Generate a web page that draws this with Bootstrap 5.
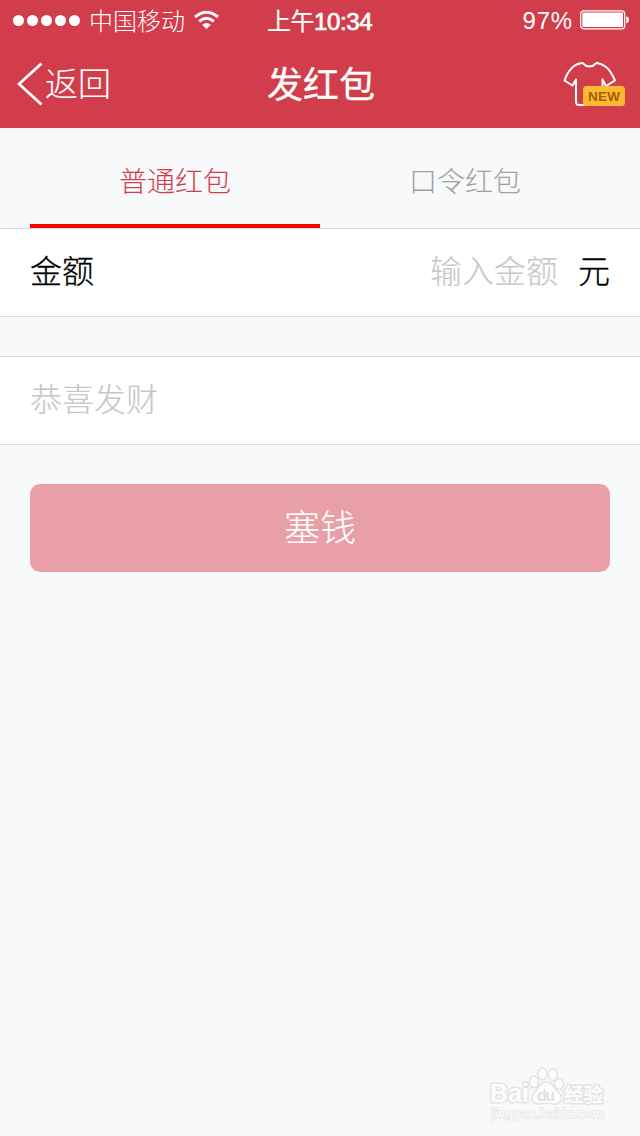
<!DOCTYPE html>
<html lang="zh-CN">
<head>
<meta charset="utf-8">
<meta name="viewport" content="width=device-width, initial-scale=1">
<title>发红包</title>
<link href="https://cdn.jsdelivr.net/npm/bootstrap@5.3.0/dist/css/bootstrap.min.css" rel="stylesheet">
<style>
  body { background: #f8f9fb; font-family: "Liberation Sans", "Noto Sans CJK SC", sans-serif; font-weight: 300; color: #000; line-height: 1; }
  .app { width: 640px; height: 1136px; }
  .top { background: #d13d4b; color: #fff; height: 128px; }
  .third { flex: 1 1 0; }
  .status { height: 40px; font-size: 24px; }
  .status .label { padding-top: 3px; }
  .carrier { margin: 0 9px; }
  .dots { gap: 3px; padding-left: 13px; }
  .dots i { width: 11px; height: 11px; border-radius: 50%; background: #fff; }
  .clock { font-weight: 400; letter-spacing: -.4px; -webkit-text-stroke: .2px; padding-right: 1px; }
  .clock b { font-weight: 400; -webkit-text-stroke: .7px; }
  .titlebar { height: 88px; padding: 0 15px 0 17px; }
  .back { font-size: 33px; gap: 2px; color: #fff; -webkit-text-stroke: .15px; }
  .back svg { margin-top: 2px; }
  .page-title { font-size: 36px; font-weight: 400; -webkit-text-stroke: .3px; padding-top: 3px; }
  .tabs { height: 100px; padding: 0 30px; font-size: 28px; }
  .tabs .nav-link { color: #a0a0a0; padding: 13px 0 0; border-radius: 0; border-bottom: 4px solid transparent; }
  .tabs .nav-link.active { color: #d13d4b; border-color: #f00; }
  .field { height: 89px; padding: 0 30px; background: #fff; border-top: 1px solid #dadcdf; border-bottom: 1px solid #dadcdf; font-size: 32px; }
  .field .form-control { font: inherit; background: transparent; color: #000; height: 60px; box-shadow: none; -webkit-text-stroke: .15px; }
  .field .form-control::placeholder { color: #c7c7cd; opacity: 1; }
  .field label, .unit { -webkit-text-stroke: .3px; padding-bottom: 1px; }
  .submit, .submit:disabled { height: 88px; border-radius: 10px; background: #e89fa5; color: #fff; font-size: 36px; font-weight: 300; opacity: 1; border: 0; padding-top: 8px; -webkit-text-stroke: .15px; }
</style>
</head>
<body>
<main class="app d-flex flex-column overflow-hidden">
  <header class="top">
    <div class="status d-flex align-items-center">
      <div class="third d-flex align-items-center">
        <span class="dots d-flex"><i></i><i></i><i></i><i></i><i></i></span>
        <span class="label carrier">中国移动</span>
        <svg width="26" height="20" viewBox="0 0 26 20" fill="none" stroke="#fff" stroke-width="3"><path d="M1 7Q12.500-2.600 24 7M5.200 11.400Q12.500 5.100 19.800 11.400"/><path d="M12.500 19l-4.400-4.300q4.400-3.200 8.800 0z" fill="#fff" stroke="none"/></svg>
      </div>
      <div class="label clock text-nowrap">上午<b>10:34</b></div>
      <div class="third d-flex align-items-center justify-content-end">
        <span style="letter-spacing:.8px;padding-top:2px">97%</span>
        <svg style="margin:0 10px 0 7px" width="50" height="20" viewBox="0 0 50 20"><rect x=".7" y=".8" width="44" height="18" rx="3" fill="none" stroke="#fff" stroke-width="1.2"/><rect x="2.400" y="2.500" width="40.600" height="14.600" rx="1" fill="#fff"/><path d="M46.300 6.200q2.700.7 2.700 3.600t-2.700 3.600z" fill="#fff"/></svg>
      </div>
    </div>
    <nav class="titlebar d-flex align-items-center">
      <div class="third">
        <a class="back d-inline-flex align-items-center text-decoration-none" href="#">
          <svg width="26" height="44" viewBox="0 0 26 44" fill="none" stroke="#fff" stroke-width="2.800"><path d="M24.500 1.500L2 22l22.500 20.500"/></svg>
          <span class="pt-1">返回</span>
        </a>
      </div>
      <h1 class="page-title m-0">发红包</h1>
      <div class="third d-flex justify-content-end">
        <svg width="64" height="46" viewBox="0 0 64 46"><path d="M21 2C24 2 22.500 5.500 28.500 5.500C34.500 5.500 33 2 36 2C43 3.500 47 7 49.500 11Q52 15 54 19.500L45 25L41.500 18.500V44H18Q15 44 15 40.500V18.500L11.500 24.500L3.500 19.500Q6 12 10.500 7.500Q14 3 21 2Z" fill="none" stroke="#fff" stroke-width="2" stroke-linejoin="round"/><rect x="22" y="25" width="42" height="20" rx="3.500" fill="#fdb934"/><text x="43" y="40" font-family="Liberation Sans, sans-serif" font-size="13.500" font-weight="700" fill="#a75d00" text-anchor="middle" textLength="32">NEW</text></svg>
      </div>
    </nav>
  </header>

  <nav class="tabs nav nav-fill flex-nowrap">
    <a class="nav-link active w-50 d-flex align-items-center justify-content-center" href="#">普通红包</a>
    <a class="nav-link w-50 d-flex align-items-center justify-content-center" href="#">口令红包</a>
  </nav>

  <form>
    <div class="field d-flex align-items-center">
      <label for="amount" class="text-nowrap">金额</label>
      <input id="amount" class="form-control border-0 p-0 text-end" placeholder="输入金额">
      <span class="unit" style="margin-left:20px">元</span>
    </div>
    <div class="field d-flex align-items-center" style="margin-top:39px">
      <input class="form-control border-0 p-0" placeholder="恭喜发财" aria-label="祝福语">
    </div>
    <div style="padding:39px 30px 0">
      <button class="submit btn w-100" type="button" disabled>塞钱</button>
    </div>
  </form>

  <footer class="mt-auto d-flex justify-content-end" style="padding:0 32px 12px 0">
    <svg width="120" height="60" viewBox="0 0 120 60" fill="#fdfdfd" stroke="#e3e5e5" stroke-width="1.600" font-family="Liberation Sans, Noto Sans CJK SC, sans-serif" font-weight="700">
      <text x="2" y="38" font-size="25" textLength="39" lengthAdjust="spacingAndGlyphs" stroke-width="3" paint-order="stroke">Bai</text>
      <ellipse cx="46" cy="18" rx="4.500" ry="6"/><ellipse cx="54.500" cy="10" rx="4.500" ry="6"/><ellipse cx="65" cy="10.500" rx="4.500" ry="6"/><ellipse cx="71" cy="20" rx="4.500" ry="5.500"/>
      <path d="M58 18C66 18 66 25 71 29C77 35 71 41 65 40Q58 38.500 52 40C45 41 41 35 46 29C51 25 51 18 58 18Z"/>
      <text x="49" y="37" font-size="16" textLength="18" fill="#dfe1e2" stroke="none">du</text>
      <text x="76" y="38" font-size="19" textLength="39" lengthAdjust="spacingAndGlyphs" stroke-width="3" paint-order="stroke">经验</text>
      <text x="3" y="54" font-family="DejaVu Sans, sans-serif" font-size="12.500" font-weight="400" textLength="113" lengthAdjust="spacingAndGlyphs" stroke-width="1.500" paint-order="stroke">jingyan.baidu.com</text>
    </svg>
  </footer>
</main>
<script src="https://cdn.jsdelivr.net/npm/bootstrap@5.3.0/dist/js/bootstrap.bundle.min.js"></script>
</body>
</html>
